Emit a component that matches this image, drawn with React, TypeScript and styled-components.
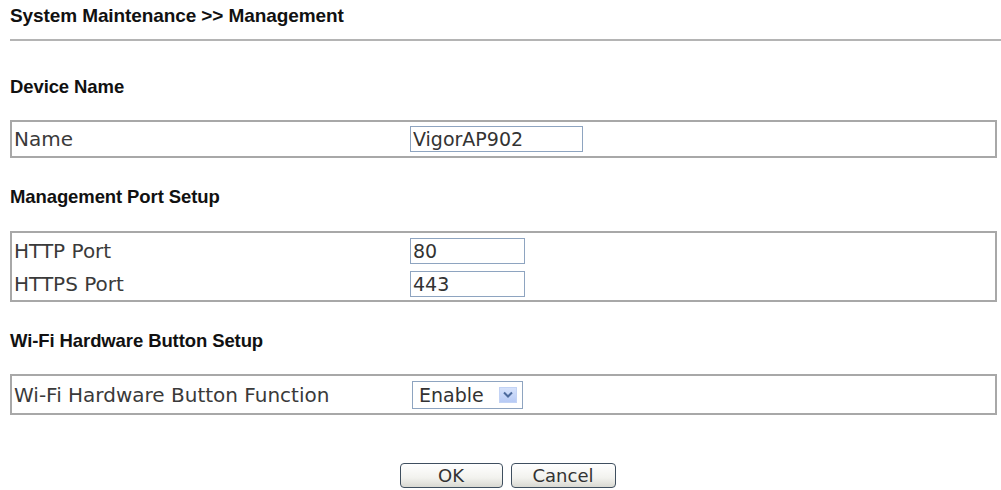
import React from 'react';
import styled, { createGlobalStyle } from 'styled-components';

const GlobalStyle = createGlobalStyle`
    html, body {
        margin: 0;
        padding: 0;
        background: #ffffff;
    }
    body {
        font-family: "DejaVu Sans", Verdana, sans-serif;
    }
`;

const Page = styled.div`
    width: 1001px;
    height: 490px;
    padding: 6px 4px 0 10px;
    box-sizing: border-box;
    display: flex;
    flex-direction: column;
`;

const Title = styled.div`
    font-family: "Liberation Sans", Arial, sans-serif;
    font-weight: bold;
    font-size: 19px;
    line-height: 20px;
    color: #111;
    letter-spacing: -0.1px;
`;

const Rule = styled.div`
    height: 2px;
    background: #b4b4b4;
    margin: 13px -4px 0 0;
`;

const SectionTitle = styled.div<{ gap: number }>`
    font-family: "Liberation Sans", Arial, sans-serif;
    font-weight: bold;
    font-size: 18.5px;
    line-height: 20px;
    color: #111;
    letter-spacing: -0.1px;
    margin-top: ${(p) => p.gap}px;
`;

const Box = styled.div<{ gap: number }>`
    margin-top: ${(p) => p.gap}px;
    border: 2px solid #a8a8a8;
    display: flex;
    flex-direction: column;
`;

const Row = styled.div<{ h: number }>`
    display: grid;
    grid-template-columns: 398px 1fr;
    align-items: center;
    height: ${(p) => p.h}px;
`;

const Label = styled.div`
    padding-left: 2px;
    font-size: 20px;
    color: #3a3a3a;
`;

const Input = styled.input<{ w: number }>`
    width: ${(p) => p.w}px;
    height: 26px;
    box-sizing: border-box;
    border: 1px solid #8ea4c0;
    padding: 0 2px;
    font-family: "DejaVu Sans", Verdana, sans-serif;
    font-size: 19px;
    color: #333;
    background: #fff;
    outline: none;
`;

const Select = styled.div`
    width: 111px;
    height: 28px;
    margin-left: 2px;
    box-sizing: border-box;
    border: 1px solid #8ea4c0;
    display: flex;
    align-items: center;
    justify-content: space-between;
    padding: 0 5px 0 6px;
    font-size: 19px;
    color: #333;
`;

const Arrow = styled.div`
    width: 18px;
    height: 16px;
    box-sizing: border-box;
    border: 1px solid #c3d3f5;
    background: linear-gradient(#d6e2fb, #b7caf5);
    display: flex;
    align-items: center;
    justify-content: center;
`;

const Buttons = styled.div`
    margin-top: 48px;
    display: flex;
    justify-content: center;
    gap: 8px;
    padding-left: 8px;
`;

const Button = styled.button<{ w: number }>`
    width: ${(p) => p.w}px;
    height: 25px;
    box-sizing: border-box;
    border: 1px solid #3f4f5f;
    border-radius: 4px;
    background: linear-gradient(#ffffff, #f2f2ee 60%, #d9d9d2);
    font-family: "DejaVu Sans", Verdana, sans-serif;
    font-size: 18px;
    color: #333;
    padding: 0;
    line-height: 22px;
`;

const App: React.FC = () => {
    return (
        <Page>
            <GlobalStyle />
            <Title>System Maintenance &gt;&gt; Management</Title>
            <Rule />

            <SectionTitle gap={36}>Device Name</SectionTitle>
            <Box gap={23}>
                <Row h={34}>
                    <Label>Name</Label>
                    <div>
                        <Input w={173} defaultValue="VigorAP902" />
                    </div>
                </Row>
            </Box>

            <SectionTitle gap={29}>Management Port Setup</SectionTitle>
            <Box gap={24}>
                <Row h={35}>
                    <Label>HTTP Port</Label>
                    <div>
                        <Input w={115} defaultValue="80" />
                    </div>
                </Row>
                <Row h={32}>
                    <Label>HTTPS Port</Label>
                    <div>
                        <Input w={115} defaultValue="443" />
                    </div>
                </Row>
            </Box>

            <SectionTitle gap={29}>Wi-Fi Hardware Button Setup</SectionTitle>
            <Box gap={23}>
                <Row h={37}>
                    <Label>Wi-Fi Hardware Button Function</Label>
                    <div>
                        <Select>
                            <span>Enable</span>
                            <Arrow>
                                <svg width="10" height="7" viewBox="0 0 10 7">
                                    <path d="M1 1.5 L5 5.5 L9 1.5" fill="none" stroke="#4c6a9c" strokeWidth="2" />
                                </svg>
                            </Arrow>
                        </Select>
                    </div>
                </Row>
            </Box>

            <Buttons>
                <Button w={103}>OK</Button>
                <Button w={105}>Cancel</Button>
            </Buttons>
        </Page>
    );
};

export default App;
